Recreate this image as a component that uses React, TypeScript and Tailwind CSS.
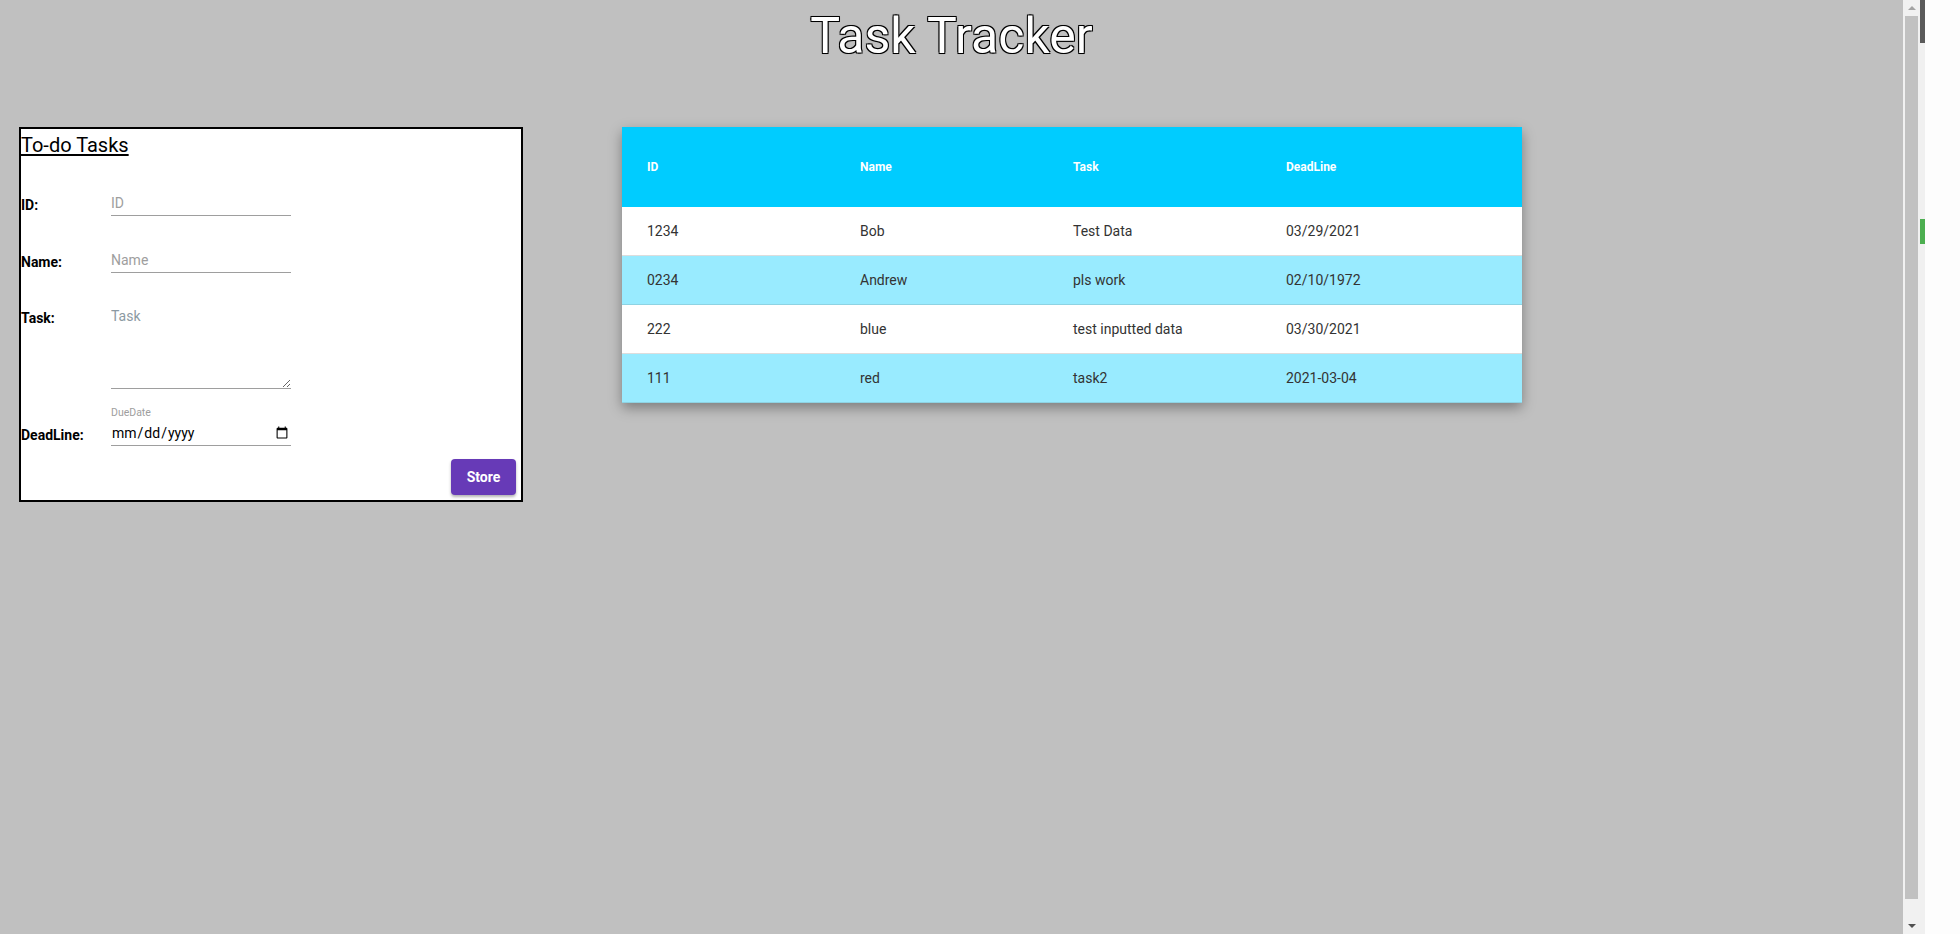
import React from 'react';

const rows = [
  { id: '1234', name: 'Bob', task: 'Test Data', deadline: '03/29/2021' },
  { id: '0234', name: 'Andrew', task: 'pls work', deadline: '02/10/1972' },
  { id: '222', name: 'blue', task: 'test inputted data', deadline: '03/30/2021' },
  { id: '111', name: 'red', task: 'task2', deadline: '2021-03-04' },
];

const TaskForm: React.FC = () => {
  return (
    <div className="w-[504px] h-[375px] border-2 border-black bg-white flex flex-col shrink-0">
      <h3 className="mt-[4px] text-[20px] leading-[24px] underline underline-offset-[2px] text-black w-fit">
        To-do Tasks
      </h3>

      {/* ID */}
      <div className="mt-[33px] flex items-start">
        <label className="w-[90px] mt-[5px] text-sm font-bold text-black">ID:</label>
        <input
          placeholder="ID"
          className="w-[180px] h-[26px] border-b border-[#9e9e9e] text-sm text-black placeholder:text-[#9e9e9e] outline-none"
        />
      </div>

      {/* Name */}
      <div className="mt-[31px] flex items-start">
        <label className="w-[90px] mt-[5px] text-sm font-bold text-black">Name:</label>
        <input
          placeholder="Name"
          className="w-[180px] h-[26px] border-b border-[#9e9e9e] text-sm text-black placeholder:text-[#9e9e9e] outline-none"
        />
      </div>

      {/* Task */}
      <div className="mt-[30px] flex items-start">
        <label className="w-[90px] mt-[5px] text-sm font-bold text-black">Task:</label>
        <textarea
          placeholder="Task"
          className="w-[180px] h-[86px] pt-[3px] border-b border-[#9e9e9e] text-sm leading-normal text-black placeholder:text-[#8c9aa3] outline-none"
        />
      </div>

      {/* DeadLine */}
      <div className="mt-[17px] flex items-start">
        <label className="w-[90px] mt-[19px] text-sm font-bold text-black">DeadLine:</label>
        <div className="w-[180px] flex flex-col">
          <span className="h-[14px] text-[10.5px] leading-[14px] text-[#9e9e9e]">DueDate</span>
          <input
            type="date"
            className="w-[180px] h-[26px] border-b border-[#9e9e9e] text-sm text-black outline-none"
          />
        </div>
      </div>

      <div className="mt-[13px] flex justify-end pr-[5px]">
        <button className="w-[65px] h-[36px] rounded bg-[#673ab7] text-white text-sm font-bold shadow-[0_2px_3px_rgba(0,0,0,0.3)]">
          Store
        </button>
      </div>
    </div>
  );
};

const TaskTable: React.FC = () => {
  return (
    <div className="w-[900px] shrink-0 bg-white shadow-[0_5px_12px_rgba(0,0,0,0.35)]">
      <div className="grid grid-cols-[213px_213px_213px_1fr] h-[80px] items-center bg-[#00ccff] text-white text-xs font-bold">
        <div className="pl-[25px]">ID</div>
        <div className="pl-[25px]">Name</div>
        <div className="pl-[25px]">Task</div>
        <div className="pl-[25px]">DeadLine</div>
      </div>
      {rows.map((r, i) => (
        <div
          key={r.id}
          className={
            i % 2 === 0
              ? 'grid grid-cols-[213px_213px_213px_1fr] h-[49px] items-center bg-white border-b border-[#dddddd] text-sm text-[#333333]'
              : 'grid grid-cols-[213px_213px_213px_1fr] h-[49px] items-center bg-[#99ebff] border-b border-[#8ed3e3] text-sm text-[#333333]'
          }
        >
          <div className="pl-[25px]">{r.id}</div>
          <div className="pl-[25px]">{r.name}</div>
          <div className="pl-[25px]">{r.task}</div>
          <div className="pl-[25px]">{r.deadline}</div>
        </div>
      ))}
    </div>
  );
};

const FakeScrollbar: React.FC = () => (
  <div className="w-[17px] h-full bg-[#f1f1f1] flex flex-col items-center">
    <div className="h-[16px] flex items-center justify-center">
      <div className="w-0 h-0 border-x-[4px] border-x-transparent border-b-[4px] border-b-[#a3a3a3]" />
    </div>
    <div className="w-[13px] h-[883px] bg-[#c1c1c1]" />
    <div className="flex-1" />
    <div className="h-[17px] flex items-center justify-center">
      <div className="w-0 h-0 border-x-[4px] border-x-transparent border-t-[4px] border-t-[#505050]" />
    </div>
  </div>
);

export default function App() {
  return (
    <div className="flex w-full h-[934px] overflow-hidden font-['Roboto','Liberation_Sans',sans-serif]">
      <div className="flex-1 bg-[#c0c0c0] flex flex-col">
        <h1 className="mt-[7px] h-[58px] text-center text-[50px] leading-[58px] text-white [text-shadow:-1px_-1px_0_#000,1px_-1px_0_#000,-1px_1px_0_#000,1px_1px_0_#000,0_0_2px_#555]">
          Task Tracker
        </h1>
        <div className="mt-[62px] flex items-start pl-[19px] gap-[99px]">
          <TaskForm />
          <TaskTable />
        </div>
      </div>
      <FakeScrollbar />
      <div className="w-[5px] h-full bg-[#f0f0f0] flex flex-col">
        <div className="h-[43px] bg-[#5a5a5a]" />
        <div className="mt-[176px] h-[25px] bg-[#4caf50]" />
      </div>
      <div className="w-[35px] h-full bg-[#fdfdfd]" />
    </div>
  );
}
